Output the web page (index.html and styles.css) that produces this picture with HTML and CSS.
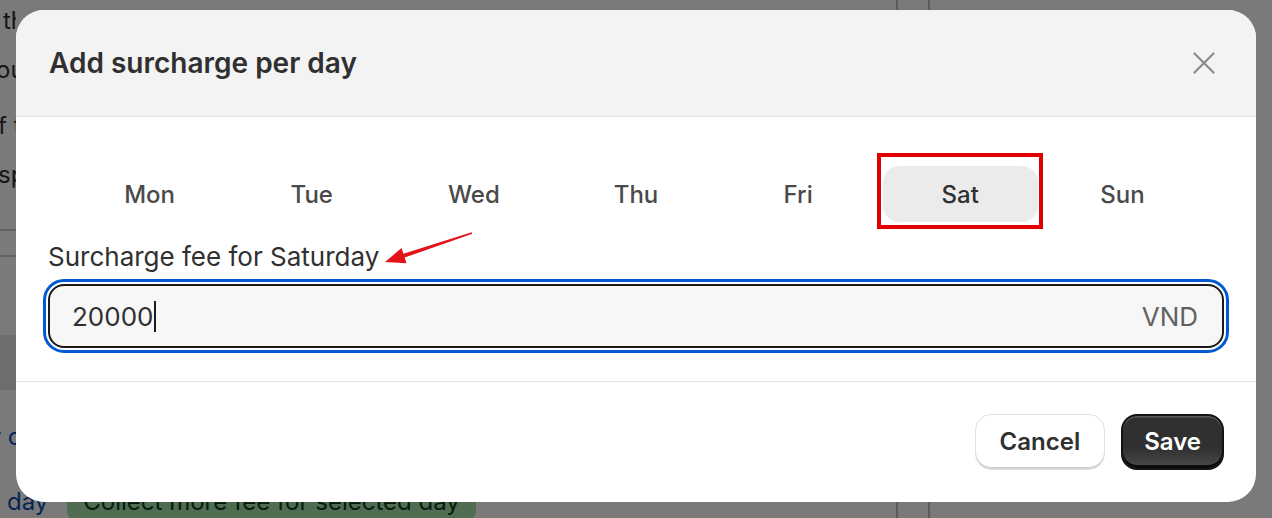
FILE: index.html
```html
<!DOCTYPE html>
<html lang="en">
<head>
<meta charset="utf-8">
<title>Add surcharge per day</title>
<link rel="stylesheet" href="styles.css">
</head>
<body>
<div class="page">
  <div class="bg">
    <div class="bg-main">
      <div class="bg-clip">
        <div class="bg-text">
          <div class="bg-para">
            <div class="bg-line l1">the</div>
            <div class="bg-line l2">ou</div>
          </div>
          <div class="bg-para">
            <div class="bg-line l3">f t</div>
            <div class="bg-line l4">sp</div>
          </div>
        </div>
      </div>
      <div class="bg-rule rule-a"></div>
      <div class="bg-rule rule-b"></div>
      <div class="bg-band"></div>
      <div class="bg-clip">
        <div class="bg-link-line">r c</div>
      </div>
      <div class="bg-row">
        <span class="bg-link">day</span>
        <span class="bg-badge">Collect more fee for selected day</span>
      </div>
    </div>
    <div class="bg-sep"></div>
    <div class="bg-narrow"></div>
    <div class="bg-sep"></div>
    <div class="bg-side"></div>
  </div>

  <div class="overlay"></div>

  <div class="modal" role="dialog" aria-label="Add surcharge per day">
    <div class="modal-header">
      <h2 class="modal-title">Add surcharge per day</h2>
      <button class="close-btn" aria-label="Close">
        <svg width="22" height="22" viewBox="0 0 22 22"><path d="M1.5 1.5 L20.5 20.5 M20.5 1.5 L1.5 20.5" stroke="#8a8a8a" stroke-width="2.2" stroke-linecap="round" fill="none"/></svg>
      </button>
    </div>
    <div class="modal-body">
      <div class="day-tabs">
        <button class="day-tab">Mon</button>
        <button class="day-tab">Tue</button>
        <button class="day-tab">Wed</button>
        <button class="day-tab">Thu</button>
        <button class="day-tab">Fri</button>
        <button class="day-tab is-selected">Sat</button>
        <button class="day-tab">Sun</button>
      </div>
      <label class="field-label">Surcharge fee for Saturday</label>
      <div class="field">
        <span class="field-value">20000<span class="caret"></span></span>
        <span class="field-suffix">VND</span>
      </div>
    </div>
    <div class="modal-footer">
      <button class="btn btn-secondary">Cancel</button>
      <button class="btn btn-primary">Save</button>
    </div>
  </div>

  <svg class="annot-arrow" width="1272" height="518" viewBox="0 0 1272 518">
    <polygon points="385,262 401.5,248.1 403.4,253.8 471.7,232.2 472.3,233.8 404.6,257.6 406.5,263.3" fill="#e3131b"/>
  </svg>
</div>
</body>
</html>
```

FILE: styles.css
```css
* { box-sizing: border-box; }

html, body {
  margin: 0;
  padding: 0;
}

body {
  width: 1272px;
  height: 518px;
  overflow: hidden;
  font-family: Inter, "Noto Sans", "Liberation Sans", sans-serif;
  color: #303030;
}

.page {
  position: relative;
  width: 1272px;
  height: 518px;
  background: #ffffff;
  overflow: hidden;
}

/* ---------- background page ---------- */
.bg {
  display: grid;
  grid-template-columns: 896px 2px 30px 2px 1fr;
  height: 100%;
}

.bg-main {
  overflow: hidden;
  font-size: 24px;
  color: #303030;
}

.bg-clip {
  width: 16px;
  overflow: hidden;
}

.bg-text { margin-top: -4px; }

.bg-para { line-height: 49px; }
.bg-para + .bg-para { margin-top: 7px; }

.bg-line { white-space: nowrap; }
.l1 { margin-left: 3px; }
.l2 { margin-left: -4px; }
.l3 { margin-left: -2px; }
.l4 { margin-left: -2px; }

.bg-rule {
  height: 2px;
  background: #d0d0d0;
}
.rule-a { margin-top: 30px; }
.rule-b { margin-top: 24px; }

.bg-band {
  margin-top: 78px;
  height: 55px;
  background: #e6e6e6;
}

.bg-link-line {
  margin-top: 22px;
  margin-left: -8px;
  line-height: 49px;
  color: #0b4fb0;
  white-space: nowrap;
}

.bg-row {
  margin-top: 16px;
  padding-left: 7px;
  display: flex;
  align-items: baseline;
  gap: 19px;
  line-height: 49px;
  white-space: nowrap;
}

.bg-link { color: #0b4fb0; }

.bg-badge {
  background: #a7e3ab;
  color: #0c3b1f;
  padding: 4px 16px;
  line-height: 36px;
  border-radius: 14px;
}

.bg-sep { background: #bcbcbc; }

.overlay {
  position: absolute;
  inset: 0;
  background: rgba(0, 0, 0, 0.52);
}

/* ---------- modal ---------- */
.modal {
  position: absolute;
  left: 16px;
  top: 10px;
  width: 1240px;
  height: 492px;
  background: #ffffff;
  border-radius: 28px;
  overflow: hidden;
  display: flex;
  flex-direction: column;
}

.modal-header {
  height: 106.5px;
  flex: none;
  background: #f3f3f3;
  border-bottom: 1.5px solid #e3e3e3;
  display: flex;
  align-items: center;
  justify-content: space-between;
  padding: 0 32px 0 33px;
}

.modal-title {
  margin: 0;
  font-size: 28px;
  font-weight: 600;
  color: #303030;
}

.close-btn {
  width: 40px;
  height: 40px;
  padding: 0;
  border: 0;
  background: transparent;
  display: flex;
  align-items: center;
  justify-content: center;
}

.modal-body {
  padding: 49.5px 32px 33px;
  border-bottom: 1.5px solid #e3e3e3;
}

.day-tabs {
  display: grid;
  grid-template-columns: repeat(7, 1fr);
  gap: 7px;
  padding: 0 24px;
}

.day-tab {
  position: relative;
  height: 56px;
  border: 0;
  border-radius: 16px;
  background: transparent;
  font-family: inherit;
  font-size: 24px;
  font-weight: 500;
  color: #4a4a4a;
  padding: 0;
}

.day-tab.is-selected {
  background: #ebebeb;
  color: #303030;
}

.day-tab.is-selected::after {
  content: "";
  position: absolute;
  top: -13px;
  left: -6px;
  right: -5px;
  bottom: -7px;
  border: 4px solid #e00000;
}

.field-label {
  display: block;
  margin-top: 17px;
  margin-bottom: 9px;
  font-size: 26px;
  line-height: 36px;
  color: #303030;
}

.field {
  height: 64px;
  border: 2px solid #1a1a1a;
  border-radius: 16px;
  background: #f7f7f7;
  outline: 3px solid #005bd3;
  outline-offset: 2px;
  display: flex;
  align-items: center;
  justify-content: space-between;
  padding: 0 24px 0 22px;
  font-size: 26px;
}

.field-value {
  display: flex;
  align-items: center;
  color: #303030;
}

.caret {
  display: inline-block;
  width: 2px;
  height: 31px;
  margin-left: 1px;
  background: #1a1a1a;
}

.field-suffix { color: #616161; }

.modal-footer {
  flex: 1;
  display: flex;
  justify-content: flex-end;
  align-items: flex-start;
  gap: 16px;
  padding: 31.5px 32px 0;
}

.btn {
  height: 56px;
  border-radius: 16px;
  font-family: inherit;
  font-size: 24px;
  font-weight: 600;
}

.btn-secondary {
  padding: 0 24px;
  background: #ffffff;
  color: #303030;
  border: 1.5px solid #e0e0e0;
  box-shadow: inset 0 -2px 0 #cfcfcf;
}

.btn-primary {
  padding: 0 21px;
  color: #ffffff;
  border: 2px solid #141414;
  background: linear-gradient(180deg, rgba(48,48,48,0) 60%, rgba(255,255,255,0.12) 100%), #303030;
  box-shadow: inset 0 -3px 0 #0a0a0a, inset 0 1.5px 0 rgba(255,255,255,0.2);
}

/* ---------- annotation ---------- */
.annot-arrow {
  position: absolute;
  left: 0;
  top: 0;
  pointer-events: none;
}
```
